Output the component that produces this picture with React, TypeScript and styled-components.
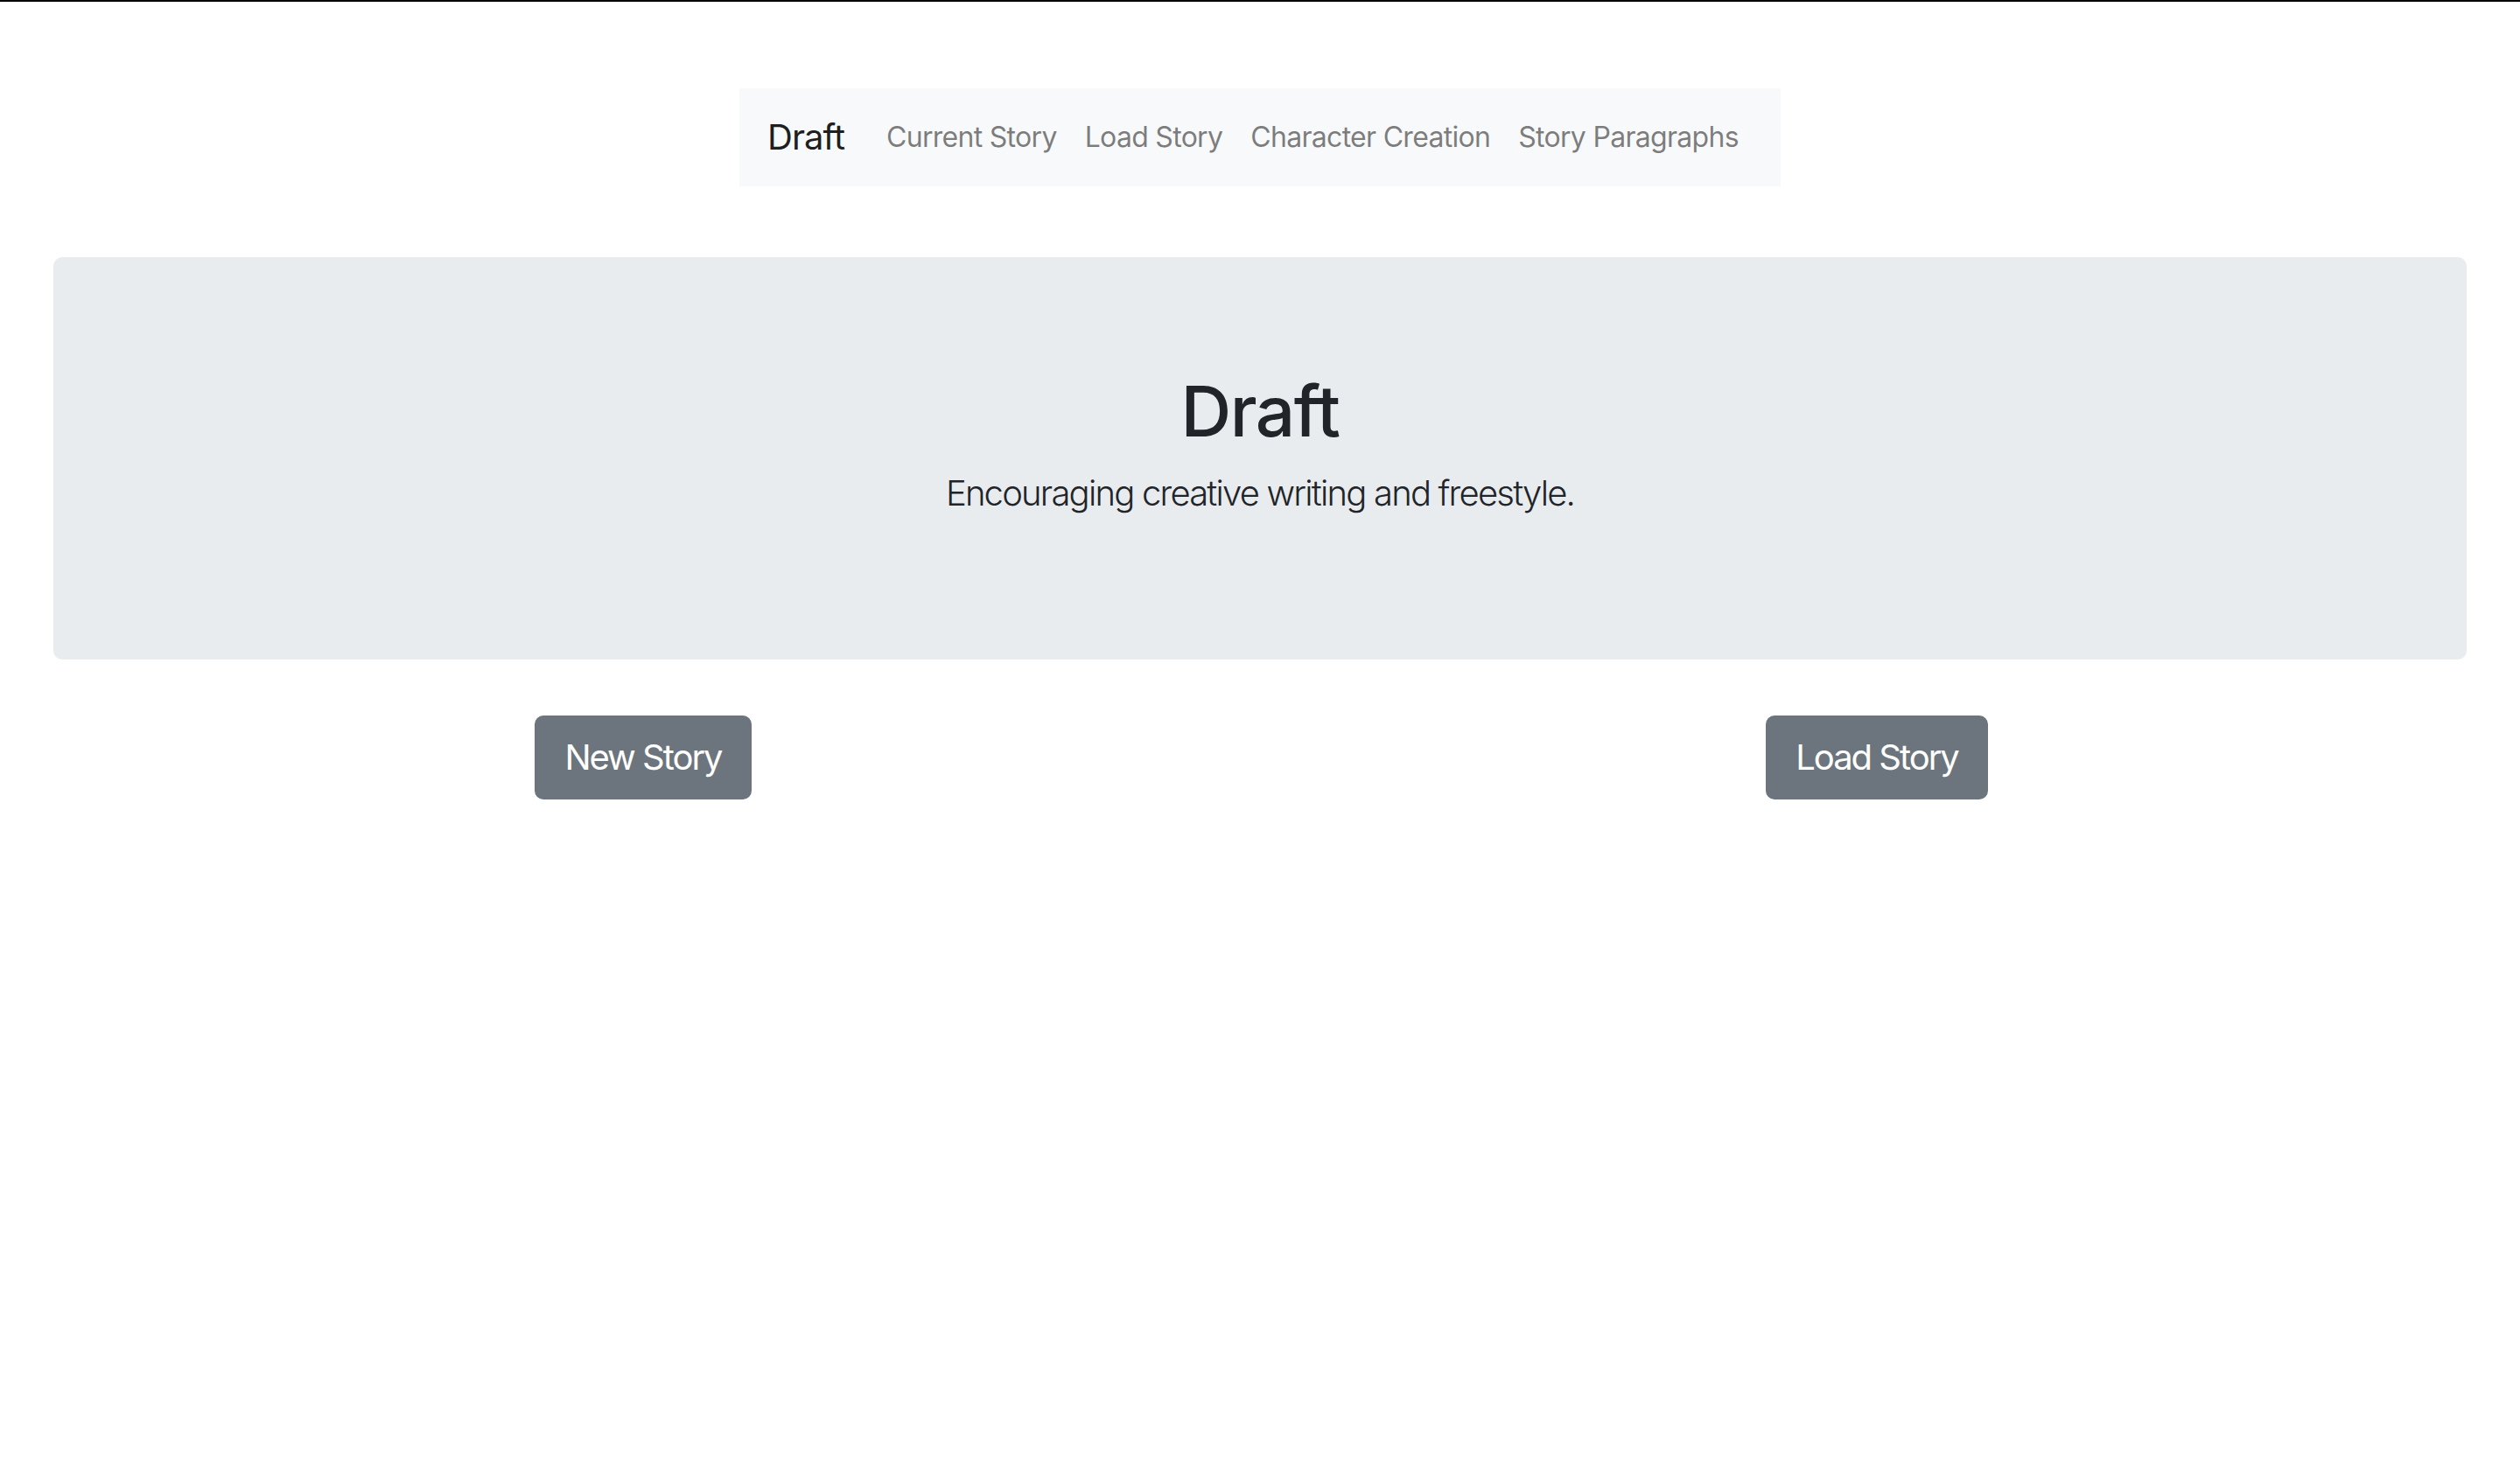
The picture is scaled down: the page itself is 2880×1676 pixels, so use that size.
import React from "react";
import styled, { createGlobalStyle } from "styled-components";

const GlobalStyle = createGlobalStyle`
  html, body {
    margin: 0;
    padding: 0;
    background: #ffffff;
    font-family: Inter, "Noto Sans", "Liberation Sans", sans-serif;
    color: #212529;
    -webkit-font-smoothing: antialiased;
  }
  * { box-sizing: border-box; }
`;

const TopRule = styled.div`
  height: 2px;
  background: #000000;
`;

const Navbar = styled.nav`
  display: flex;
  align-items: center;
  width: fit-content;
  margin: 99px auto 0;
  padding: 16px 32px;
  background: #f8f9fa;
`;

const Brand = styled.a`
  font-size: 40px;
  line-height: 60px;
  padding: 10px 0;
  margin-right: 32px;
  color: rgba(0, 0, 0, 0.9);
  text-decoration: none;
  letter-spacing: -1px;
`;

const NavList = styled.ul`
  display: flex;
  list-style: none;
  margin: 0;
  padding: 0;
`;

const NavLink = styled.a`
  display: block;
  font-size: 32px;
  line-height: 48px;
  padding: 16px;
  color: rgba(0, 0, 0, 0.5);
  text-decoration: none;
  letter-spacing: -0.7px;
`;

const Jumbotron = styled.section`
  margin: 81px 61px 64px;
  padding: 128px 64px;
  background: #e9ecef;
  border-radius: 10px;
  text-align: center;
`;

const Title = styled.h1`
  margin: 0 0 16px;
  font-size: 80px;
  line-height: 96px;
  font-weight: 500;
  color: #212529;
  letter-spacing: -1.5px;
`;

const Lead = styled.p`
  margin: 0 0 32px;
  font-size: 40px;
  line-height: 60px;
  font-weight: 300;
  color: #212529;
  letter-spacing: -1.8px;
`;

const ActionRow = styled.div`
  display: grid;
  grid-template-columns: 1fr 1fr;
  justify-items: center;
  margin: 0 30px;
`;

const Button = styled.button`
  font-family: inherit;
  font-size: 40px;
  line-height: 60px;
  padding: 16px 32px;
  color: #ffffff;
  background: #6c757d;
  border: 2px solid #6c757d;
  border-radius: 10px;
  cursor: pointer;
  letter-spacing: -2px;
`;

const links = ["Current Story", "Load Story", "Character Creation", "Story Paragraphs"];

export default function App() {
  return (
    <>
      <GlobalStyle />
      <TopRule />
      <Navbar>
        <Brand href="#">Draft</Brand>
        <NavList>
          {links.map((l) => (
            <li key={l}>
              <NavLink href="#">{l}</NavLink>
            </li>
          ))}
        </NavList>
      </Navbar>
      <Jumbotron>
        <Title>Draft</Title>
        <Lead>Encouraging creative writing and freestyle.</Lead>
      </Jumbotron>
      <ActionRow>
        <div>
          <Button>New Story</Button>
        </div>
        <div>
          <Button>Load Story</Button>
        </div>
      </ActionRow>
    </>
  );
}
